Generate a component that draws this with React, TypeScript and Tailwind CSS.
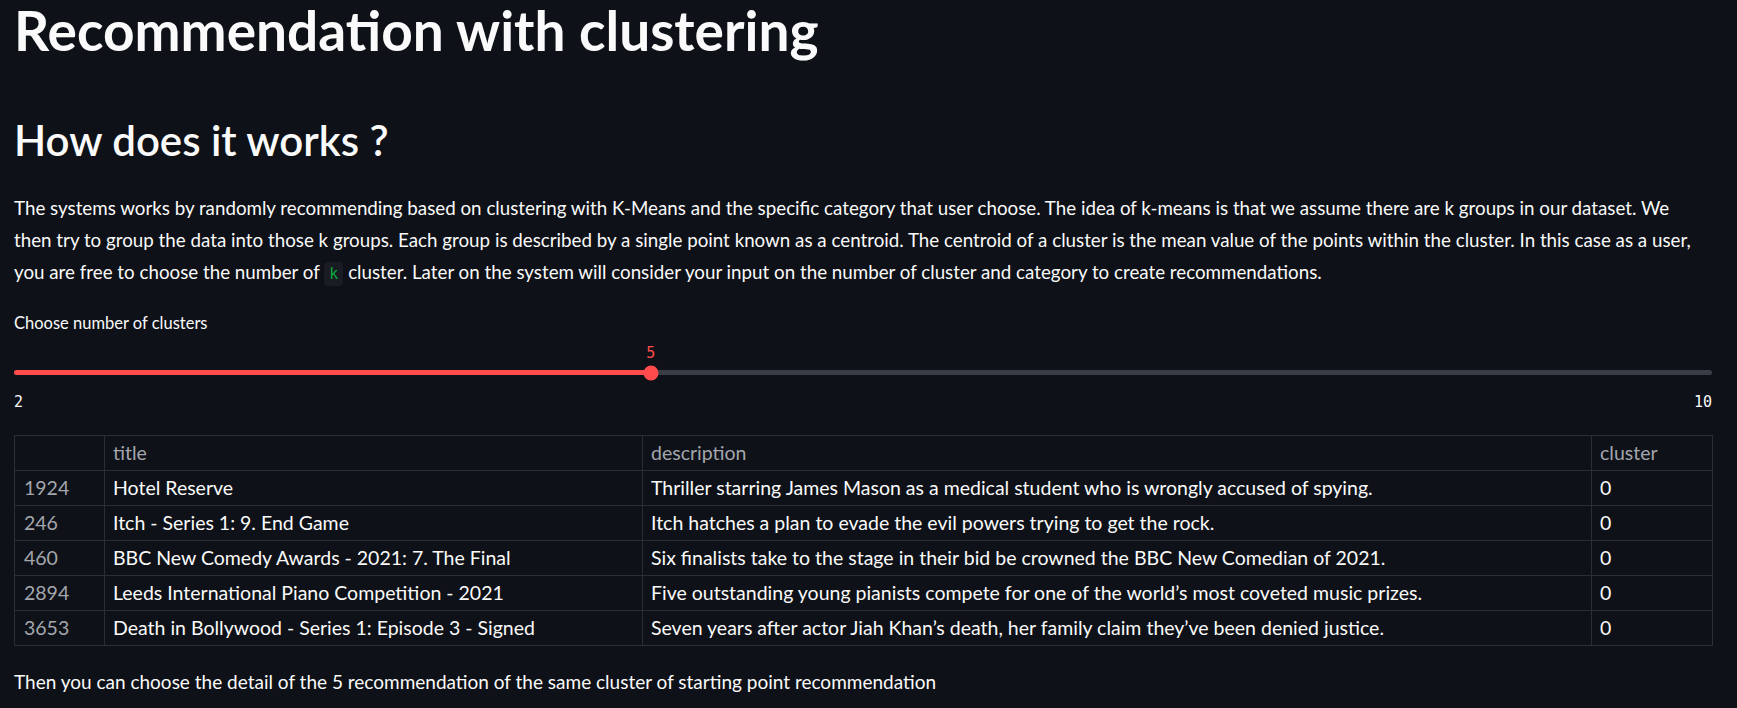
const rows = [
  { idx: "1924", title: "Hotel Reserve", description: "Thriller starring James Mason as a medical student who is wrongly accused of spying.", cluster: "0" },
  { idx: "246", title: "Itch - Series 1: 9. End Game", description: "Itch hatches a plan to evade the evil powers trying to get the rock.", cluster: "0" },
  { idx: "460", title: "BBC New Comedy Awards - 2021: 7. The Final", description: "Six finalists take to the stage in their bid be crowned the BBC New Comedian of 2021.", cluster: "0" },
  { idx: "2894", title: "Leeds International Piano Competition - 2021", description: "Five outstanding young pianists compete for one of the world\u2019s most coveted music prizes.", cluster: "0" },
  { idx: "3653", title: "Death in Bollywood - Series 1: Episode 3 - Signed", description: "Seven years after actor Jiah Khan\u2019s death, her family claim they\u2019ve been denied justice.", cluster: "0" },
];

const MIN = 2;
const MAX = 10;
const VALUE = 5;

function Slider() {
  const pct = ((VALUE - MIN) / (MAX - MIN)) * 100;
  return (
    <div className="relative pt-[8px]">
      <div className="relative h-[20px]">
        <span
          className="absolute top-0 -translate-x-1/2 font-['DejaVu_Sans_Mono',monospace] text-[15px] leading-[20px] text-[#ff4b4b]"
          style={{ left: `${pct}%` }}
        >
          {VALUE}
        </span>
      </div>
      <div className="relative mt-[7px] h-[5px] rounded-full bg-[#3a3d45]">
        <div className="h-full rounded-full bg-[#ff4b4b]" style={{ width: `${pct}%` }} />
        <div
          className="absolute top-1/2 h-[15px] w-[15px] -translate-x-1/2 -translate-y-1/2 rounded-full bg-[#ff4b4b]"
          style={{ left: `${pct}%` }}
        />
      </div>
      <div className="mt-[17px] flex justify-between font-['DejaVu_Sans_Mono',monospace] text-[15px] leading-[20px] text-[#fafafa]">
        <span>{MIN}</span>
        <span>{MAX}</span>
      </div>
    </div>
  );
}

export default function App() {
  return (
    <main className="min-h-screen bg-[#0e1117] pl-[14px] pr-[25px] font-[Lato,sans-serif] text-[#fafafa]">
      <h1 className="pt-[2px] text-[55px] font-bold leading-[56px]">Recommendation with clustering</h1>

      <h2 className="mt-[57px] text-[42px] font-semibold leading-[50px]">How does it works ?</h2>

      {/* column is a touch narrower than the page so lines break where the original does */}
      <p className="mt-[27px] w-[1686px] text-[18.75px] leading-[32px]">
        The systems works by randomly recommending based on clustering with K-Means and the specific category that user
        choose. The idea of k-means is that we assume there are k groups in our dataset. We then try to group the data into
        those k groups. Each group is described by a single point known as a centroid. The centroid of a cluster is the mean
        value of the points within the cluster. In this case as a user, you are free to choose the number of{" "}
        <code className="inline-block rounded-[4px] bg-[#1a1c24] px-[5px] py-[3px] font-['DejaVu_Sans_Mono',monospace] text-[15px] leading-[18px] text-[#09ab3b]">
          k
        </code>{" "}
        cluster. Later on the system will consider your input on the number of cluster and category to create
        recommendations.
      </p>

      <div className="mt-[23px] text-[16.5px] leading-[24px]">Choose number of clusters</div>

      <Slider />

      <table className="mt-[23px] w-[1698px] table-fixed border-collapse text-[19.5px]">
        <colgroup>
          <col className="w-[90px]" />
          <col className="w-[538px]" />
          <col className="w-[949px]" />
          <col className="w-[121px]" />
        </colgroup>
        <thead>
          <tr className="h-[35px]">
            <th className="border border-[#2b2e36]" />
            <th className="border border-[#2b2e36] px-[8px] text-left font-normal text-[#a3a6ad]">title</th>
            <th className="border border-[#2b2e36] px-[8px] text-left font-normal text-[#a3a6ad]">description</th>
            <th className="border border-[#2b2e36] px-[8px] text-left font-normal text-[#a3a6ad]">cluster</th>
          </tr>
        </thead>
        <tbody>
          {rows.map((r) => (
            <tr key={r.idx} className="h-[35px]">
              <td className="border border-[#2b2e36] px-[9px] text-[#a3a6ad]">{r.idx}</td>
              <td className="whitespace-nowrap border border-[#2b2e36] px-[8px]">{r.title}</td>
              <td className="whitespace-nowrap border border-[#2b2e36] px-[8px]">{r.description}</td>
              <td className="border border-[#2b2e36] px-[8px]">{r.cluster}</td>
            </tr>
          ))}
        </tbody>
      </table>

      <p className="mt-[20px] text-[19px] leading-[32px]">
        Then you can choose the detail of the 5 recommendation of the same cluster of starting point recommendation
      </p>
    </main>
  );
}
